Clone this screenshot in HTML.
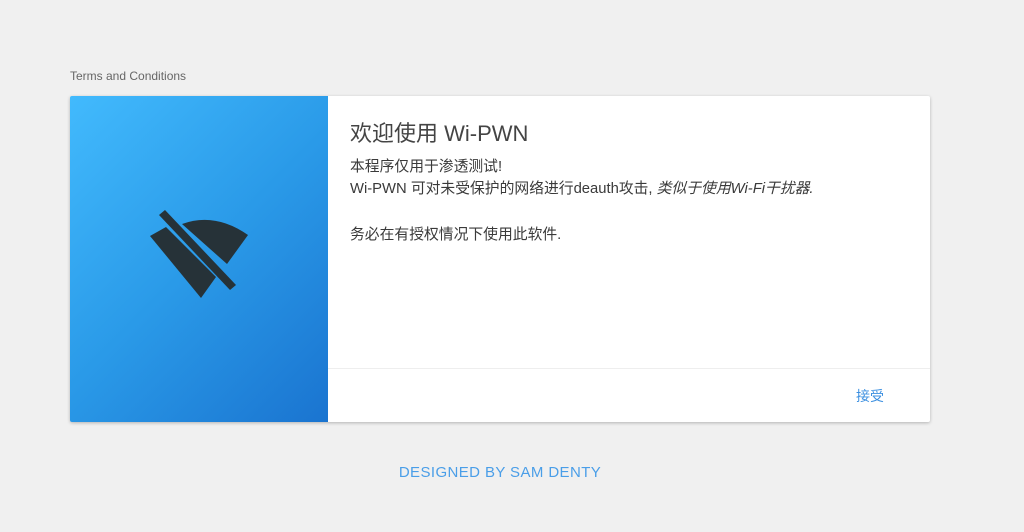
<!DOCTYPE html>
<html><head><meta charset="utf-8"><style>
html,body{margin:0;padding:0}
body{width:1024px;height:532px;background:#f0f0f0;position:relative;font-family:"Liberation Sans","Noto Sans CJK SC",sans-serif;overflow:hidden}
.t{position:absolute;left:70px;top:69px;font-size:12px;color:#666}
.card{position:absolute;left:70px;top:96px;width:860px;height:326px;background:#fff;border-radius:2px;box-shadow:0 1px 3px rgba(0,0,0,.25);overflow:hidden}
.left{position:absolute;left:0;top:0;width:258px;height:326px;background:linear-gradient(135deg,#42bafd 0%,#2a9ae8 50%,#1a74d0 100%)}
.left svg{position:absolute;left:0;top:0}
.content{position:absolute;left:280px;top:24px;color:#333}
h1{margin:0;font-weight:normal;font-size:22px;color:#444;line-height:28px}
p{margin:0;font-size:14.8px;line-height:22px;color:#3a3a3a}
.div{position:absolute;left:258px;right:0;top:272px;border-top:1px solid #eee}
.btn{position:absolute;left:786px;top:290px;font-size:14px;color:#3b8fe0}
.foot{position:absolute;left:0;width:1000px;text-align:center;top:464px;font-size:15px;color:#4a9ee8;letter-spacing:.4px}
</style></head><body>
<div class="t">Terms and Conditions</div>
<div class="card">
<div class="left"><svg width="258" height="326" viewBox="70 96 258 326">
<g fill="#263238">
<polygon points="150,236 166,227 216,277 201,298"/>
<path d="M182,224 Q215,212 248,235 L227,264 Z"/>
<polygon points="159,215 165,210 236,285 230,290"/>
</g></svg></div>
<div class="content">
<h1>欢迎使用 Wi-PWN</h1>
<p style="margin-top:8px">本程序仅用于渗透测试!</p>
<p>Wi-PWN 可对未受保护的网络进行deauth攻击, <i>类似于使用Wi-Fi干扰器.</i></p>
<p style="margin-top:24px">务必在有授权情况下使用此软件.</p>
</div>
<div class="div"></div>
<div class="btn">接受</div>
</div>
<div class="foot">DESIGNED BY SAM DENTY</div>
</body></html>
